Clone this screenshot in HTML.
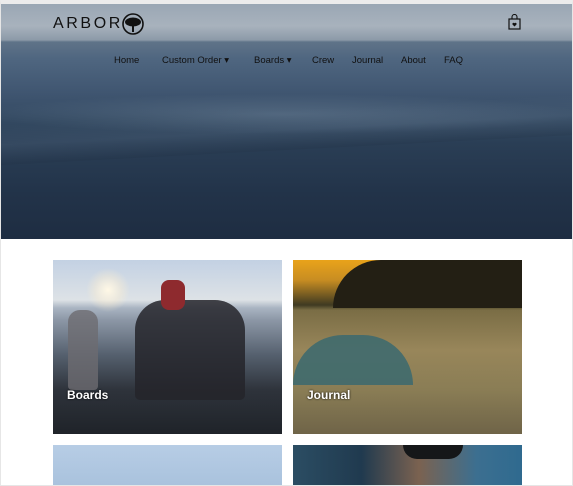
<!DOCTYPE html>
<html><head><meta charset="utf-8"><style>
*{margin:0;padding:0;box-sizing:border-box}
body{width:573px;height:486px;overflow:hidden;background:#fff;font-family:"Liberation Sans",sans-serif;position:relative}
.frame{position:absolute;left:0;top:0;width:573px;height:486px;border:1px solid #e6e6e6;border-top:4px solid #ececec;pointer-events:none}
.hero{position:absolute;left:1px;top:4px;width:572px;height:235px;
background:
radial-gradient(ellipse 300px 20px at 280px 110px,rgba(160,180,200,.25),transparent),
linear-gradient(180deg,#9aa7b4 0,#a8b2bd 22px,#8c9aa8 36px,#5f7388 38px,#4f6680 55px,#3f5570 90px,#344a62 115px,#2a3e55 140px,#223349 190px,#1e2d42 235px)}
.swell{position:absolute;left:1px;top:110px;width:572px;height:40px;background:linear-gradient(180deg,rgba(255,255,255,0) 0,rgba(120,140,165,.15) 50%,rgba(20,30,45,.1) 100%);transform:skewY(-3deg)}
.logo{position:absolute;left:53px;top:15px;font-size:16px;letter-spacing:2.6px;color:#111}
.tree{position:absolute;left:122px;top:13px}
.bag{position:absolute;left:508px;top:14px}
.nav{position:absolute;top:55px;font-size:9.5px;color:#111}
.card{position:absolute;overflow:hidden}
.card span{position:absolute;left:14px;bottom:32px;color:#fff;font-weight:bold;font-size:12px;text-shadow:0 0 2px #000}
</style></head><body>
<div class="hero"></div>
<div class="swell"></div>
<div class="logo">ARBOR</div>
<svg class="tree" width="22" height="22" viewBox="0 0 22 22"><circle cx="11" cy="11" r="10" fill="none" stroke="#111" stroke-width="1.6"/><ellipse cx="11" cy="9" rx="8" ry="4.5" fill="#111"/><rect x="10" y="11" width="2" height="8" fill="#111"/></svg>
<svg class="bag" width="13" height="16" viewBox="0 0 13 16"><rect x="1" y="5" width="11" height="10" fill="none" stroke="#111" stroke-width="1.2"/><path d="M4 5V3a2.5 2.5 0 0 1 5 0v2" fill="none" stroke="#111" stroke-width="1.1"/><path d="M6.5 12.5l-2-2a1.2 1.2 0 0 1 2-1.3 1.2 1.2 0 0 1 2 1.3z" fill="#111"/></svg>
<div class="nav" style="left:114px">Home</div>
<div class="nav" style="left:162px">Custom Order ▾</div>
<div class="nav" style="left:254px">Boards ▾</div>
<div class="nav" style="left:312px">Crew</div>
<div class="nav" style="left:352px">Journal</div>
<div class="nav" style="left:401px">About</div>
<div class="nav" style="left:444px">FAQ</div>

<div class="card" style="left:53px;top:260px;width:229px;height:174px;background:
radial-gradient(circle 22px at 55px 30px,#fff8e6,rgba(255,240,210,.4) 60%,transparent),
linear-gradient(180deg,#c3d1e3 0,#dde2e6 40px,#a9b4c2 48px,#8c97a6 60px,#55606e 95px,#2e333b 130px,#1f2329 174px)">
<div style="position:absolute;left:15px;top:50px;width:30px;height:80px;background:#6d6b70;border-radius:12px 12px 4px 4px;opacity:.8"></div>
<div style="position:absolute;left:82px;top:40px;width:110px;height:100px;background:#24242a;border-radius:30px 30px 5px 5px;opacity:.85"></div>
<div style="position:absolute;left:108px;top:20px;width:24px;height:30px;background:#8e2a2e;border-radius:8px"></div>
<span>Boards</span></div>

<div class="card" style="left:293px;top:260px;width:229px;height:174px;background:
linear-gradient(180deg,#e9a31a 0,#c88d22 20px,#3f3a22 45px,#7a6d45 50px,#98865a 90px,#8a7d55 130px,#6f6448 174px)">
<div style="position:absolute;left:40px;top:0;width:200px;height:48px;background:#231f14;border-radius:60px 0 0 0"></div>
<div style="position:absolute;left:0;top:75px;width:120px;height:50px;background:#3f6a6e;border-radius:60px 60px 0 0;opacity:.9"></div>
<span>Journal</span></div>

<div class="card" style="left:53px;top:445px;width:229px;height:41px;background:linear-gradient(180deg,#b7cde5,#a9c2dd)"></div>
<div class="card" style="left:293px;top:445px;width:229px;height:41px;background:linear-gradient(90deg,#2b4d63 0,#203a4f 30%,#7b6250 55%,#3c6f90 80%,#2f6a8f 100%)">
<div style="position:absolute;left:110px;top:0;width:60px;height:14px;background:#151719;border-radius:0 0 20px 20px"></div></div>
<div class="frame"></div>
</body></html>
